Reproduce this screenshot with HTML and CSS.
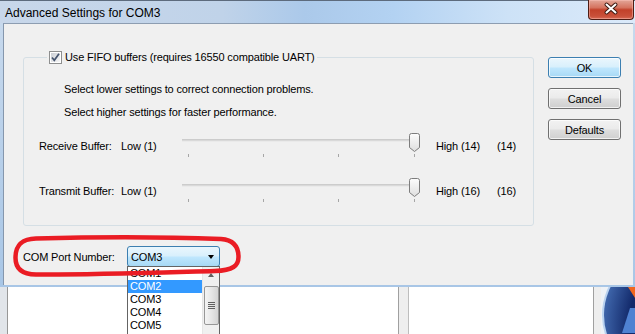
FILE: index.html
```html
<!DOCTYPE html>
<html lang="en">
<head>
    <meta charset="UTF-8">
    <title>Advanced Settings for COM3</title>
    <link rel="stylesheet" href="styles.css">
</head>
<body>
    <div class="screen">
        <div class="window">
            <div class="titlebar">
                <span class="title">Advanced Settings for COM3</span>
                <button class="close">
                    <svg width="44" height="18" viewBox="0 0 44 18">
                        <path d="M17.5 4.5 L26.5 12.5 M26.5 4.5 L17.5 12.5" stroke="#3b1810" stroke-width="4" stroke-linecap="round"/>
                        <path d="M17.5 4.5 L26.5 12.5 M26.5 4.5 L17.5 12.5" stroke="#fff" stroke-width="2" stroke-linecap="round"/>
                    </svg>
                </button>
            </div>
            <div class="frame">
                <div class="client">
                    <div class="main">
                        <fieldset class="fifo">
                            <legend>
                                <svg class="check" width="13" height="13" viewBox="0 0 13 13">
                                    <defs>
                                        <linearGradient id="chk" x1="0" y1="0" x2="1" y2="1">
                                            <stop offset="0" stop-color="#cbcfd5"/>
                                            <stop offset="1" stop-color="#f7f7f7"/>
                                        </linearGradient>
                                    </defs>
                                    <rect x="0.5" y="0.5" width="12" height="12" fill="#fff" stroke="#8e8f8f"/>
                                    <rect x="2" y="2" width="9" height="9" fill="url(#chk)"/>
                                    <path d="M3 6.5 L5.3 9.3 L10 2.8" fill="none" stroke="#45546e" stroke-width="1.7"/>
                                </svg>
                                <span>Use FIFO buffers (requires 16550 compatible UART)</span>
                            </legend>
                            <p class="hint first">Select lower settings to correct connection problems.</p>
                            <p class="hint">Select higher settings for faster performance.</p>
                            <div class="buffer">
                                <span class="buf-name">Receive Buffer:</span>
                                <span class="buf-low">Low (1)</span>
                                <svg class="slider" width="242" height="28" viewBox="0 0 242 28">
                                    <defs>
                                        <linearGradient id="thumb1" x1="0" y1="0" x2="0" y2="1">
                                            <stop offset="0" stop-color="#fdfdfd"/>
                                            <stop offset="1" stop-color="#dedede"/>
                                        </linearGradient>
                                    </defs>
                                    <line x1="2" y1="8" x2="238" y2="8" stroke="#a9a9a9"/>
                                    <line x1="2" y1="9" x2="238" y2="9" stroke="#e4e4e4"/>
                                    <path d="M8.5 22 V25 M83.5 22 V25 M158.5 22 V25 M234.5 22 V25" stroke="#a6a6a6"/>
                                    <path d="M229.5 3.5 Q229.5 1.5 231.5 1.5 H237.5 Q239.5 1.5 239.5 3.5 V15.5 L234.5 19.5 L229.5 15.5 Z" fill="url(#thumb1)" stroke="#7d7d7d"/>
                                </svg>
                                <span class="buf-high">High (14)</span>
                                <span class="buf-val">(14)</span>
                            </div>
                            <div class="buffer">
                                <span class="buf-name">Transmit Buffer:</span>
                                <span class="buf-low">Low (1)</span>
                                <svg class="slider" width="242" height="28" viewBox="0 0 242 28">
                                    <defs>
                                        <linearGradient id="thumb2" x1="0" y1="0" x2="0" y2="1">
                                            <stop offset="0" stop-color="#fdfdfd"/>
                                            <stop offset="1" stop-color="#dedede"/>
                                        </linearGradient>
                                    </defs>
                                    <line x1="2" y1="8" x2="238" y2="8" stroke="#a9a9a9"/>
                                    <line x1="2" y1="9" x2="238" y2="9" stroke="#e4e4e4"/>
                                    <path d="M8.5 22 V25 M83.5 22 V25 M158.5 22 V25 M234.5 22 V25" stroke="#a6a6a6"/>
                                    <path d="M229.5 3.5 Q229.5 1.5 231.5 1.5 H237.5 Q239.5 1.5 239.5 3.5 V15.5 L234.5 19.5 L229.5 15.5 Z" fill="url(#thumb2)" stroke="#7d7d7d"/>
                                </svg>
                                <span class="buf-high">High (16)</span>
                                <span class="buf-val">(16)</span>
                            </div>
                        </fieldset>
                        <div class="port-row">
                            <span class="port-label">COM Port Number:</span>
                            <div class="combo">
                                <span>COM3</span>
                                <span class="arrow"></span>
                                <div class="droplist">
                                    <ul>
                                        <li>COM1</li>
                                        <li class="sel">COM2</li>
                                        <li>COM3</li>
                                        <li>COM4</li>
                                        <li>COM5</li>
                                    </ul>
                                    <div class="scroll">
                                        <span class="up"></span>
                                        <span class="bar">
                                            <svg width="7" height="7" viewBox="0 0 7 7">
                                                <path d="M0 0.5 H7 M0 2.5 H7 M0 4.5 H7 M0 6.5 H7" stroke="#606060"/>
                                            </svg>
                                        </span>
                                    </div>
                                </div>
                            </div>
                        </div>
                    </div>
                    <div class="side">
                        <button class="btn default">OK</button>
                        <button class="btn">Cancel</button>
                        <button class="btn">Defaults</button>
                    </div>
                </div>
            </div>
        </div>
        <div class="behind">
            <div class="edge"></div>
            <div class="pane wide"></div>
            <div class="strip"></div>
            <div class="pane narrow"></div>
            <div class="strip thin"></div>
            <svg class="logo" width="34" height="47" viewBox="0 0 34 47">
                <defs>
                    <radialGradient id="orb" cx="1" cy="0.6" r="1">
                        <stop offset="0" stop-color="#1d3f8c"/>
                        <stop offset="0.8" stop-color="#12296a"/>
                        <stop offset="1" stop-color="#3d63a8"/>
                    </radialGradient>
                </defs>
                <rect width="34" height="47" fill="#eef2f7"/>
                <circle cx="65" cy="28" r="64" fill="#b9d2f0"/>
                <circle cx="66" cy="28" r="63" fill="url(#orb)"/>
                <path d="M27 0 H34 V11 Z" fill="#f0661e"/>
                <path d="M21 46 L29 21 H34 V46 Z" fill="#4f82d2"/>
            </svg>
        </div>
        <svg class="circled" width="250" height="52" viewBox="0 230 250 52">
            <path d="M36 238.5 C90 237, 170 237, 221 239 C235 240, 238.5 248, 238.5 257 C238.5 265.5, 233 270.5, 215 271 C160 272.5, 85 275, 36 274.5 C21 274.3, 15.5 268, 15.5 258 C15.5 246, 20.5 239, 36 238.5 Z" fill="none" stroke="#ea1c24" stroke-width="4.5"/>
        </svg>
    </div>
</body>
</html>
```

FILE: styles.css
```css
*{
    margin: 0;
    padding: 0;
    box-sizing: border-box;
}

body{
    width: 635px;
    height: 334px;
    overflow: hidden;
    font-family: "Liberation Sans", Arial, sans-serif;
    font-size: 11px;
    letter-spacing: -0.15px;
    color: #000;
    background: #e8ebef;
}
.screen{
    position: relative;
    width: 635px;
    height: 334px;
    overflow: hidden;
}

/* window frame */
.window{
    display: flex;
    flex-direction: column;
    height: 287px;
}
.titlebar{
    display: flex;
    align-items: flex-start;
    height: 23px;
    border-top: 1px solid #5d6b7d;
    background: linear-gradient(to right, #c8d7ea 0%, #c0d3e9 35%, #abc9ea 48%, #b3d2f2 62%, #cde2f7 80%, #dbeafa 100%);
}
.title{
    font-size: 12px;
    letter-spacing: 0;
    line-height: 16px;
    padding: 4px 0 0 5px;
}
.close{
    display: flex;
    margin: -1px 1px 0 auto;
    width: 46px;
    height: 20px;
    border: 1px solid #4e1d14;
    border-top: none;
    border-radius: 0 0 4px 4px;
    background: linear-gradient(#e3a698 0%, #d5735f 40%, #c2412a 52%, #c9503a 85%, #d86c55 100%);
    box-shadow: inset 0 0 0 1px rgba(255, 200, 190, 0.45);
}
.frame{
    flex: 1;
    padding: 0 2px 2px 3px;
    background: linear-gradient(#c7d9ed, #a8c6e6);
}
.client{
    display: flex;
    height: 100%;
    padding-left: 19px;
    background-color: #f0f0f0;
    border-left: 1px solid #8597ad;
    border-top: 1px solid #8d9db1;
}

/* left column */
.main{
    display: flex;
    flex-direction: column;
    width: 511px;
}
.fifo{
    margin-top: 26px;
    min-width: 0;
    padding: 0 0 20px 15px;
    border: 1px solid #d5dfe5;
    border-radius: 3px;
}
.fifo legend{
    display: flex;
    align-items: center;
    height: 14px;
    margin-left: 8px;
    padding: 0 2px;
}
.check{
    margin-right: 3px;
}
.hint{
    margin-left: 25px;
    line-height: 13px;
}
.hint.first{
    margin-top: 19px;
}
.hint + .hint{
    margin-top: 10px;
}
.buffer{
    display: flex;
    align-items: center;
    height: 28px;
    margin-top: 13px;
}
.buffer + .buffer{
    margin-top: 17px;
}
.buf-name{
    width: 82px;
}
.buf-low{
    width: 59px;
}
.buf-high{
    width: 61px;
    margin-left: 14px;
}

.port-row{
    display: flex;
    align-items: center;
    height: 21px;
    margin-top: 20px;
}
.port-label{
    width: 104px;
}
.combo{
    position: relative;
    display: flex;
    align-items: center;
    width: 93px;
    height: 21px;
    padding-left: 3px;
    border: 1px solid #3c7fb1;
    border-radius: 3px;
    background: linear-gradient(#eaf6fd 0%, #d9f0fc 45%, #bee6fd 55%, #a7d9f5 100%);
}
.arrow{
    margin: 1px 5px 0 auto;
    border-left: 3.5px solid transparent;
    border-right: 3.5px solid transparent;
    border-top: 4px solid #000;
}
.droplist{
    position: absolute;
    left: -1px;
    top: 19px;
    display: flex;
    width: 93px;
    height: 72px;
    background-color: #fff;
    border: 1px solid #646464;
}
.droplist ul{
    width: 74px;
    list-style-type: none;
}
.droplist li{
    line-height: 13px;
    padding-left: 2px;
}
.droplist li.sel{
    color: #fff;
    background-color: #3399ff;
}
.scroll{
    display: flex;
    flex-direction: column;
    align-items: center;
    width: 17px;
    background-color: #f0f0f0;
    border-left: 1px solid #e6e6e6;
}
.up{
    margin-top: 6px;
    border-left: 3.5px solid transparent;
    border-right: 3.5px solid transparent;
    border-bottom: 4px solid #606060;
}
.bar{
    display: flex;
    align-items: center;
    justify-content: center;
    width: 15px;
    height: 39px;
    margin-top: 9px;
    border: 1px solid #979797;
    border-radius: 2px;
    background: linear-gradient(to right, #f4f4f4, #e6e6e6 50%, #d4d4d4);
}

/* buttons */
.side{
    display: flex;
    flex-direction: column;
    gap: 10px;
    margin-left: 14px;
    padding-top: 33px;
}
.btn{
    width: 73px;
    height: 21px;
    font-family: "Liberation Sans", Arial, sans-serif;
    font-size: 11px;
    letter-spacing: -0.15px;
    color: #000;
    border: 1px solid #707070;
    border-radius: 3px;
    background: linear-gradient(#f2f2f2 0%, #ebebeb 45%, #dddddd 55%, #cfcfcf 100%);
    box-shadow: inset 0 0 0 1px rgba(255, 255, 255, 0.7);
}
.btn.default{
    border-color: #3c7fb1;
    background: linear-gradient(#eaf6fd 0%, #d9f0fc 45%, #bee6fd 55%, #a7d9f5 100%);
}

/* windows behind */
.behind{
    display: flex;
    height: 47px;
}
.edge{
    width: 8px;
    background-color: #e1e5ea;
    border-right: 1px solid #979797;
}
.pane{
    background-color: #fff;
}
.pane.wide{
    width: 390px;
}
.pane.narrow{
    width: 184px;
}
.strip{
    width: 11px;
    background-color: #eeeeee;
    border-left: 1px solid #a0a0a0;
    border-right: 1px solid #bdbdbd;
}
.strip.thin{
    width: 8px;
    border-right: none;
}

/* annotation */
.circled{
    position: absolute;
    left: 0;
    top: 230px;
}
```
